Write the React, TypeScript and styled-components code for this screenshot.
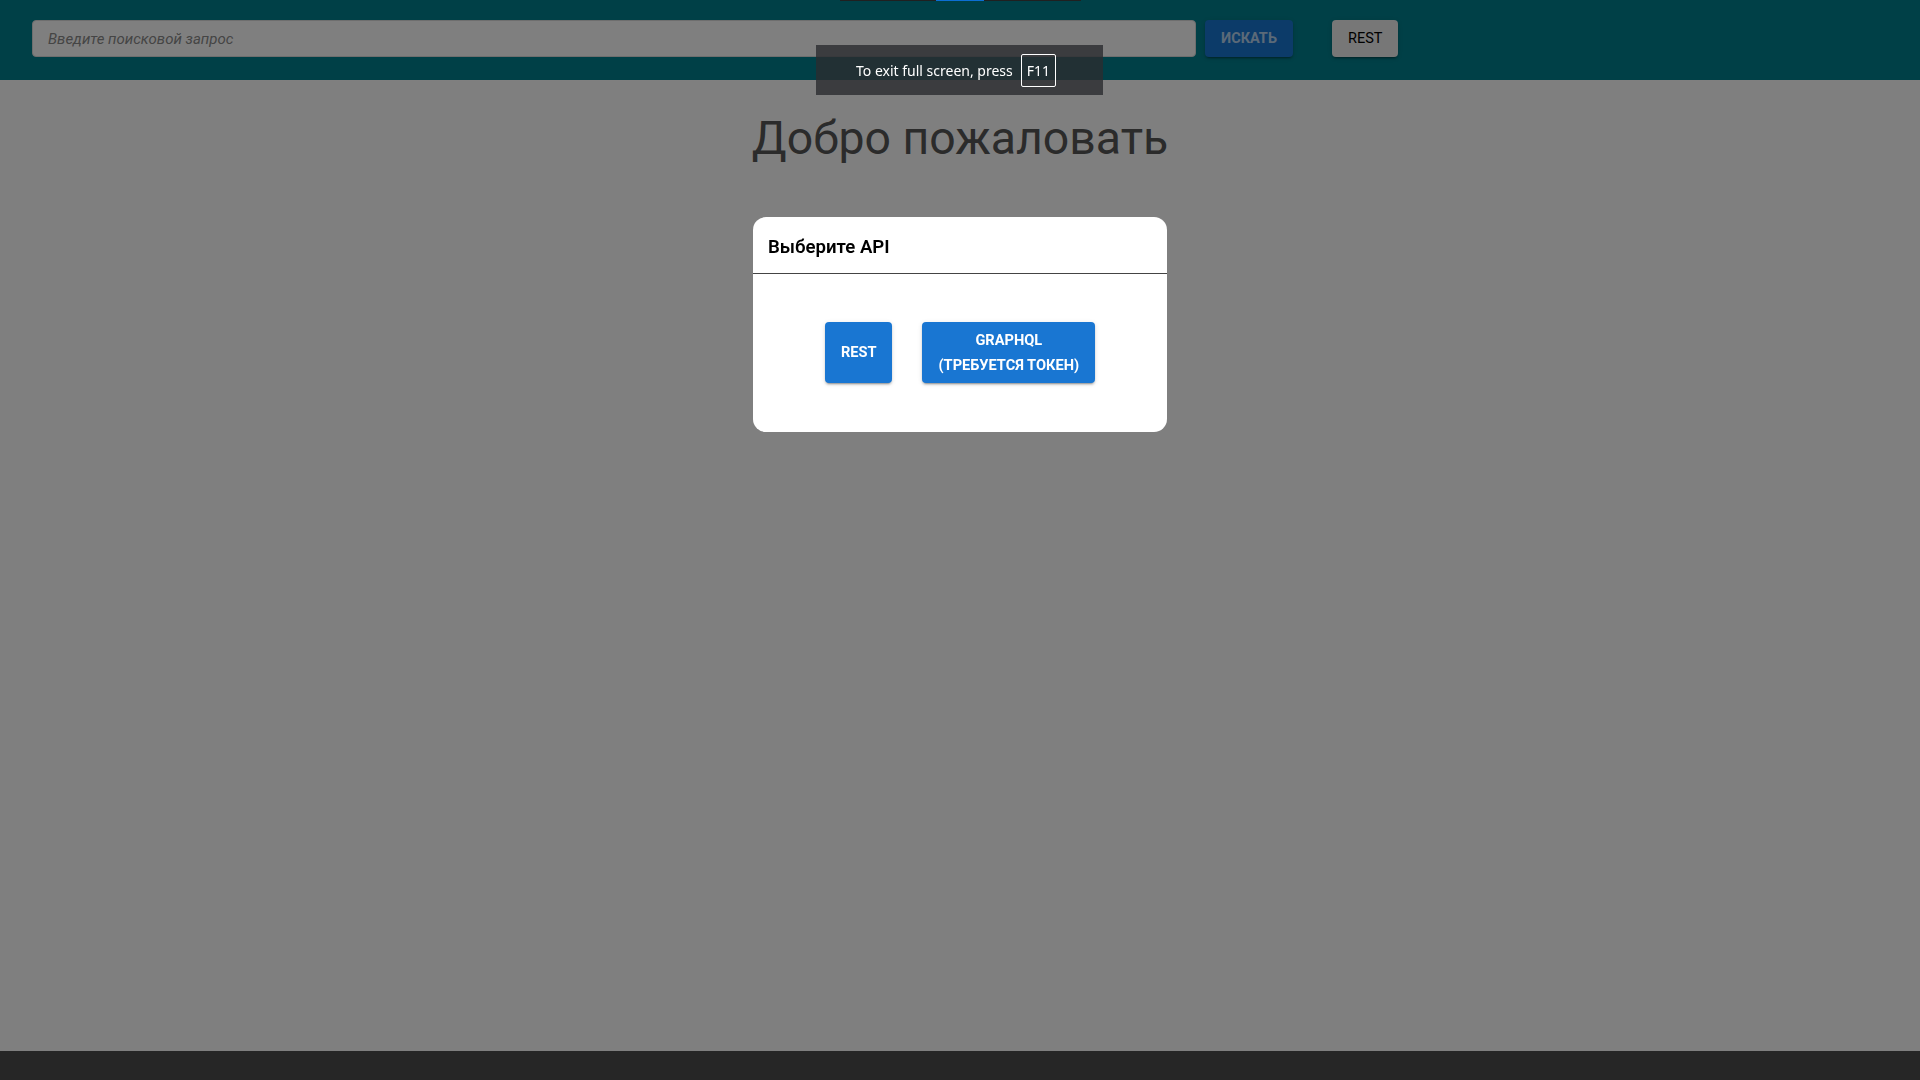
import styled, { createGlobalStyle } from "styled-components";

// Base page styles
const GlobalStyle = createGlobalStyle`
  html, body {
    margin: 0;
    padding: 0;
    background: #ffffff;
    font-family: Roboto, "Noto Sans", Arial, sans-serif;
  }
  * {
    box-sizing: border-box;
  }
`;

const Page = styled.div`
  display: flex;
  flex-direction: column;
  min-height: 100vh;
`;

// Top bar with the search form
const Header = styled.header`
  display: flex;
  align-items: flex-start;
  height: 80px;
  padding: 20px 0 0 32px;
  background: #00808e;
`;

const SearchInput = styled.input`
  width: 1164px;
  height: 37px;
  padding: 0 15px;
  border: 1px solid #dcdcdc;
  border-radius: 4px;
  background: #ffffff;
  font-family: Roboto, sans-serif;
  font-size: 15px;
  font-style: italic;
  color: #333;
  &::placeholder {
    color: #8a8a8a;
  }
  &:focus {
    outline: none;
  }
`;

const HeaderButton = styled.button<{ $variant: "primary" | "plain" }>`
  height: 37px;
  margin-left: ${(p) => (p.$variant === "primary" ? "9px" : "39px")};
  padding: 0 16px;
  border: none;
  border-radius: 4px;
  font-family: Roboto, sans-serif;
  font-size: 14.5px;
  font-weight: ${(p) => (p.$variant === "primary" ? 700 : 400)};
  text-transform: uppercase;
  background: ${(p) => (p.$variant === "primary" ? "#1976d2" : "#eeeeee")};
  color: ${(p) => (p.$variant === "primary" ? "rgba(255,255,255,0.7)" : "#000")};
  box-shadow: 0 3px 1px -2px rgba(0, 0, 0, 0.2), 0 2px 2px 0 rgba(0, 0, 0, 0.14),
    0 1px 5px 0 rgba(0, 0, 0, 0.12);
  cursor: pointer;
`;

const Main = styled.main`
  display: flex;
  flex: 1;
  flex-direction: column;
  align-items: center;
`;

const Title = styled.h3`
  margin: 30px 0 0;
  font-family: Roboto, sans-serif;
  font-size: 46.4px;
  font-weight: 400;
  line-height: 56px;
  color: #565656;
`;

const Footer = styled.footer`
  height: 29px;
  background: #4c4c4c;
`;

// Modal dialog for API choice
const Backdrop = styled.div`
  position: fixed;
  inset: 0;
  display: flex;
  justify-content: center;
  align-items: flex-start;
  padding-top: 217px;
  background: rgba(0, 0, 0, 0.5);
`;

const Dialog = styled.div`
  width: 414px;
  border-radius: 13px;
  background: #ffffff;
  overflow: hidden;
`;

const DialogTitle = styled.h2`
  margin: 0;
  padding: 14px 15px 10px;
  border-bottom: 1px solid #444;
  font-family: Roboto, sans-serif;
  font-size: 18.6px;
  font-weight: 600;
  line-height: 32px;
  color: #000;
`;

const DialogBody = styled.div`
  display: flex;
  justify-content: center;
  gap: 30px;
  padding: 48px 0 49px;
`;

const ChoiceButton = styled.button`
  height: 61px;
  padding: 0 16px;
  border: none;
  border-radius: 4px;
  background: #1976d2;
  color: #fff;
  font-family: Roboto, sans-serif;
  font-size: 14.6px;
  font-weight: 700;
  line-height: 25px;
  text-transform: uppercase;
  box-shadow: 0 3px 1px -2px rgba(0, 0, 0, 0.2), 0 2px 2px 0 rgba(0, 0, 0, 0.14),
    0 1px 5px 0 rgba(0, 0, 0, 0.12);
  cursor: pointer;
`;

// Browser fullscreen hint drawn on top
const TopIndicator = styled.div`
  position: fixed;
  top: 0;
  left: 840px;
  display: flex;
  width: 241px;
  height: 1px;
  background: #202020;
`;

const IndicatorActive = styled.div`
  width: 48px;
  margin-left: 96px;
  background: #0c6fd4;
`;

const Toast = styled.div`
  position: fixed;
  top: 45px;
  left: 816px;
  display: flex;
  align-items: center;
  gap: 8px;
  width: 287px;
  height: 50px;
  padding-left: 40px;
  background: rgba(42, 44, 48, 0.8);
  font-family: "Noto Sans", "Open Sans", sans-serif;
  font-size: 14px;
  color: #fff;
`;

const KeyCap = styled.span`
  display: flex;
  align-items: center;
  height: 33px;
  padding: 0 5px;
  border: 1px solid #fff;
  border-radius: 2px;
`;

function App() {
  return (
    <>
      <GlobalStyle />
      <Page>
        <Header>
          <SearchInput placeholder="Введите поисковой запрос" />
          <HeaderButton $variant="primary">Искать</HeaderButton>
          <HeaderButton $variant="plain">REST</HeaderButton>
        </Header>
        <Main>
          <Title>Добро пожаловать</Title>
        </Main>
        <Footer />
      </Page>
      <Backdrop>
        <Dialog>
          <DialogTitle>Выберите API</DialogTitle>
          <DialogBody>
            <ChoiceButton>REST</ChoiceButton>
            <ChoiceButton>
              GraphQL
              <br />
              (требуется токен)
            </ChoiceButton>
          </DialogBody>
        </Dialog>
      </Backdrop>
      <TopIndicator>
        <IndicatorActive />
      </TopIndicator>
      <Toast>
        To exit full screen, press
        <KeyCap>F11</KeyCap>
      </Toast>
    </>
  );
}

export default App;
